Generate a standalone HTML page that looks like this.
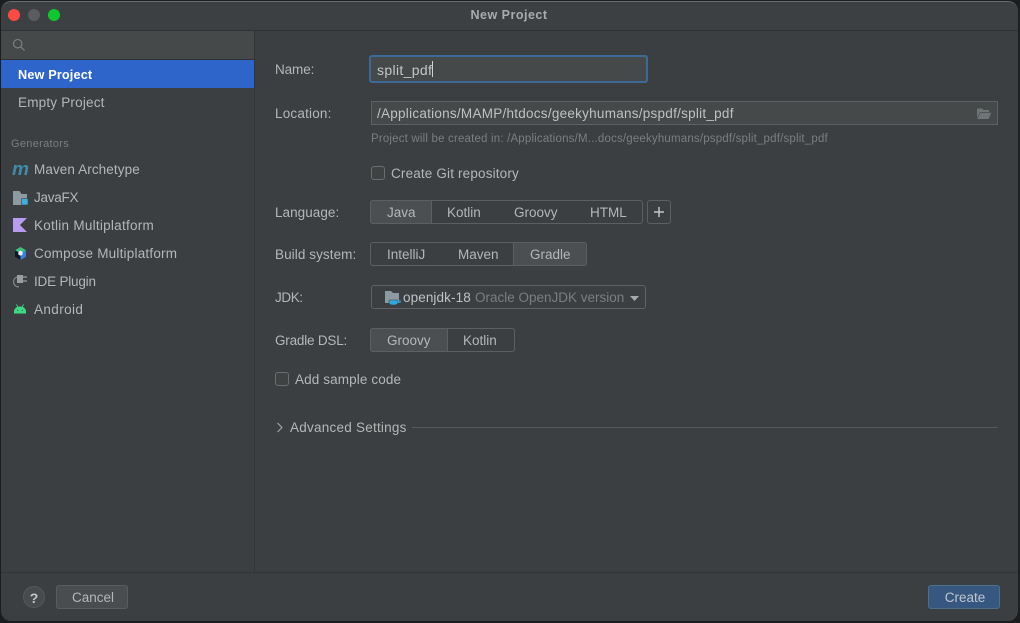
<!DOCTYPE html>
<html><head><meta charset="utf-8"><style>
html,body{margin:0;padding:0;background:#1c1d1e;width:1020px;height:623px;overflow:hidden}
*{box-sizing:border-box}
body{font-family:"Liberation Sans",sans-serif;font-size:13.5px;color:#b4b6b7}
#win{position:absolute;left:1px;top:1px;width:1017px;height:620px;background:#3c3f41;border-radius:10px;overflow:hidden;border-top:1px solid #6a6c6e}
.a{position:absolute}
.t{position:absolute;white-space:nowrap;line-height:16px;height:16px;margin-top:1px}
.b{position:absolute;border:1px solid #5e6060;border-radius:3px}
.sel{position:absolute;background:#4b4f52;border:1px solid #5e6060}
.c{position:absolute;width:14px;height:14px;background:#3f4243;border:1px solid #6a6c6d;border-radius:3px}
</style></head><body>
<div class="a" style="left:0;top:0;width:1020px;height:623px;overflow:hidden">
<div id="win"></div>
<!-- title bar -->
<div class="a" style="left:1px;top:2px;width:1017px;height:28px;background:#3d4042;border-radius:10px 10px 0 0"></div>
<div class="a" style="left:1px;top:30px;width:1017px;height:1px;background:#2f3132"></div>
<div class="a" style="left:8px;top:9px;width:12px;height:12px;border-radius:50%;background:#fc4a45"></div>
<div class="a" style="left:28px;top:9px;width:12px;height:12px;border-radius:50%;background:#5a5c5e"></div>
<div class="a" style="left:48px;top:9px;width:12px;height:12px;border-radius:50%;background:#0fc82f"></div>
<div class="t" style="left:0;top:6px;width:1018px;text-align:center;font-weight:bold;font-size:12.5px;color:#a9abac;letter-spacing:.5px">New Project</div>
<!-- sidebar -->
<div class="a" style="left:254px;top:31px;width:1px;height:541px;background:#323435"></div>
<div class="a" style="left:1px;top:31px;width:253px;height:28px;background:#45494a"></div>
<div class="a" style="left:1px;top:59px;width:253px;height:1px;background:#2f3132"></div>
<svg class="a" style="left:12px;top:38px" width="14" height="14" viewBox="0 0 14 14" fill="none" stroke="#7f8385" stroke-width="1.1"><circle cx="5.7" cy="5.7" r="4.2"/><path d="M8.8 8.8L12.6 12.6"/></svg>
<div class="a" style="left:1px;top:60px;width:253px;height:28px;background:#2e65ca"></div>
<div class="t" style="left:18px;top:66px;color:#fff;font-weight:bold;font-size:12.7px;letter-spacing:.15px">New Project</div>
<div class="t" style="left:18px;top:94px;letter-spacing:.2px">Empty Project</div>
<div class="t" style="left:11px;top:135px;font-size:11px;color:#7b7e80;letter-spacing:.3px">Generators</div>

<svg class="a" style="left:12px;top:161px" width="18" height="16" viewBox="0 0 18 16"><text x="0" y="14" font-family="Liberation Sans" font-style="italic" font-weight="bold" font-size="18" fill="#3f8ba8" textLength="17" lengthAdjust="spacingAndGlyphs">m</text></svg>
<div class="t" style="left:34px;top:161px;letter-spacing:.1px">Maven Archetype</div>

<svg class="a" style="left:13px;top:191px" width="16" height="15" viewBox="0 0 16 15"><path d="M0 0h6.5l2 3h5.5v11H0z" fill="#8c9aa3"/><rect x="8.7" y="7.7" width="6.3" height="6.3" fill="#3ab0dd" stroke="#3c3f41" stroke-width=".6"/></svg>
<div class="t" style="left:34px;top:189px;letter-spacing:-.25px">JavaFX</div>

<svg class="a" style="left:13px;top:218px" width="14" height="14" viewBox="0 0 14 14"><path d="M0 0H14L7 7L14 14H0z" fill="#b99bf0"/></svg>
<div class="t" style="left:34px;top:217px;letter-spacing:.26px">Kotlin Multiplatform</div>

<svg class="a" style="left:14px;top:247px" width="13" height="13" viewBox="0 0 13 13"><path d="M6.5 0L12 3.2L6.5 6.4L1 3.2z" fill="#3dc27f"/><path d="M1 3.2L6.5 6.4V13L1 9.8z" fill="#0c1a26"/><path d="M12 3.2L6.5 6.4V13L12 9.8z" fill="#3d7fe0"/><circle cx="6.5" cy="6.2" r="2.3" fill="#e6eefa"/></svg>
<div class="t" style="left:34px;top:245px;letter-spacing:.21px">Compose Multiplatform</div>

<svg class="a" style="left:13px;top:274px" width="15" height="15" viewBox="0 0 15 15" fill="none"><path d="M4 3C1.8 3.8 .6 5.6 .6 7.8C.6 10.8 2.8 13 6 13" stroke="#8a8e90" stroke-width="1.1"/><path d="M4 1H10V9H4z" fill="#9a9ea1"/><path d="M10 3H14M10 7H14" stroke="#9a9ea1" stroke-width="1.3"/></svg>
<div class="t" style="left:34px;top:273px;letter-spacing:-.2px">IDE Plugin</div>

<svg class="a" style="left:14px;top:304px" width="12" height="10" viewBox="0 0 12 10"><path d="M0 9.5V7.5C0 4.8 2.5 2.5 6 2.5S12 4.8 12 7.5V9.5z" fill="#3ddc84"/><path d="M2.5 .4L4 3.4M9.5 .4L8 3.4" stroke="#3ddc84" stroke-width=".9"/><circle cx="3.8" cy="6.2" r=".6" fill="#3c3f41"/><circle cx="8.2" cy="6.2" r=".6" fill="#3c3f41"/></svg>
<div class="t" style="left:34px;top:301px;letter-spacing:.4px">Android</div>

<!-- form -->
<div class="t" style="left:275px;top:61px;letter-spacing:-.1px">Name:</div>
<div class="a" style="left:369px;top:55px;width:279px;height:28px;background:#45494a;border:2.5px solid #3c6a97;border-radius:3px"></div>
<div class="t" style="left:377px;top:61px;font-size:14px;letter-spacing:.35px;color:#c4c6c7">split_pdf</div>
<div class="a" style="left:432px;top:61px;width:1px;height:16px;background:#d0d0d0"></div>

<div class="t" style="left:275px;top:105px;letter-spacing:.2px">Location:</div>
<div class="a" style="left:371px;top:101px;width:627px;height:24px;background:#45494a;border:1px solid #5f6262"></div>
<div class="t" style="left:377px;top:105px;letter-spacing:.26px;color:#bfc1c2">/Applications/MAMP/htdocs/geekyhumans/pspdf/split_pdf</div>
<svg class="a" style="left:976px;top:107px" width="16" height="13" viewBox="0 0 16 13"><path d="M1 1.5H6L7.5 3H13V5H4L1 11z" fill="#6f7476"/><path d="M4.3 5.8H15.3L12.6 12H1.3z" fill="#6f7476"/></svg>
<div class="t" style="left:371px;top:130px;font-size:11.5px;color:#7b7e80;letter-spacing:.18px">Project will be created in: /Applications/M...docs/geekyhumans/pspdf/split_pdf/split_pdf</div>

<div class="c" style="left:371px;top:166px"></div>
<div class="t" style="left:391px;top:165px;letter-spacing:.16px">Create Git repository</div>

<div class="t" style="left:275px;top:204px;letter-spacing:.05px">Language:</div>
<div class="b" style="left:370px;top:200px;width:273px;height:24px"></div>
<div class="sel" style="left:370px;top:200px;width:62px;height:24px;border-radius:3px 0 0 3px"></div>
<div class="t" style="left:387px;top:204px">Java</div>
<div class="t" style="left:447px;top:204px">Kotlin</div>
<div class="t" style="left:514px;top:204px">Groovy</div>
<div class="t" style="left:590px;top:204px">HTML</div>
<div class="b" style="left:647px;top:200px;width:24px;height:24px"></div>
<svg class="a" style="left:653px;top:206px" width="12" height="12" viewBox="0 0 12 12"><path d="M6 1V11M1 6H11" stroke="#c2c4c5" stroke-width="1.5"/></svg>

<div class="t" style="left:275px;top:246px;letter-spacing:.08px">Build system:</div>
<div class="b" style="left:370px;top:242px;width:217px;height:24px"></div>
<div class="sel" style="left:513px;top:242px;width:74px;height:24px;border-radius:0 3px 3px 0"></div>
<div class="t" style="left:387px;top:246px">IntelliJ</div>
<div class="t" style="left:458px;top:246px">Maven</div>
<div class="t" style="left:530px;top:246px">Gradle</div>

<div class="t" style="left:275px;top:289px;letter-spacing:-.4px">JDK:</div>
<div class="a" style="left:371px;top:285px;width:275px;height:24px;border:1px solid #5f6262;border-radius:3px"></div>
<svg class="a" style="left:385px;top:291px" width="16" height="15" viewBox="0 0 16 15"><path d="M0 0H6L8 2H14V12H0z" fill="#8c9aa3"/><path d="M4 9H13V11C13 13 11.5 14 8.5 14S4 13 4 11z" fill="#2fa9df" stroke="#3c3f41" stroke-width=".5"/><path d="M13 9.7H15.2V11.3H13" fill="none" stroke="#2fa9df" stroke-width=".9"/></svg>
<div class="t" style="left:403px;top:289px;letter-spacing:.1px;color:#bfc1c2">openjdk-18</div>
<div class="t" style="left:475px;top:289px;color:#7b7e80">Oracle OpenJDK version</div>
<svg class="a" style="left:630px;top:296px" width="9" height="5" viewBox="0 0 9 5"><path d="M0 0H9L4.5 5z" fill="#a8abad"/></svg>

<div class="t" style="left:275px;top:332px;letter-spacing:-.2px">Gradle DSL:</div>
<div class="b" style="left:370px;top:328px;width:145px;height:24px"></div>
<div class="sel" style="left:370px;top:328px;width:78px;height:24px;border-radius:3px 0 0 3px"></div>
<div class="t" style="left:387px;top:332px">Groovy</div>
<div class="t" style="left:463px;top:332px">Kotlin</div>

<div class="c" style="left:275px;top:372px"></div>
<div class="t" style="left:295px;top:371px;letter-spacing:.12px">Add sample code</div>

<svg class="a" style="left:276px;top:422px" width="8" height="11" viewBox="0 0 8 11" fill="none"><path d="M1.5 1L6 5.5L1.5 10" stroke="#a6a9ab" stroke-width="1.1"/></svg>
<div class="t" style="left:290px;top:419px;letter-spacing:.24px">Advanced Settings</div>
<div class="a" style="left:412px;top:427px;width:586px;height:1px;background:#56595a"></div>

<!-- footer -->
<div class="a" style="left:1px;top:572px;width:1017px;height:1px;background:#323435"></div>
<div class="a" style="left:23px;top:586px;width:22px;height:22px;border-radius:50%;background:#484b4d;border:1px solid #55585a"></div>
<div class="t" style="left:23px;top:589px;width:22px;text-align:center;font-weight:bold;font-size:14px;color:#c6c8c9">?</div>
<div class="a" style="left:56px;top:585px;width:72px;height:24px;background:#494d4f;border:1px solid #5a5d5f;border-radius:3px"></div>
<div class="t" style="left:57px;top:589px;width:72px;text-align:center">Cancel</div>
<div class="a" style="left:928px;top:585px;width:72px;height:24px;background:#365880;border:1px solid #4c708c;border-radius:3px"></div>
<div class="t" style="left:929px;top:589px;width:72px;text-align:center;color:#c0c6cc">Create</div>
</div>
</body></html>
